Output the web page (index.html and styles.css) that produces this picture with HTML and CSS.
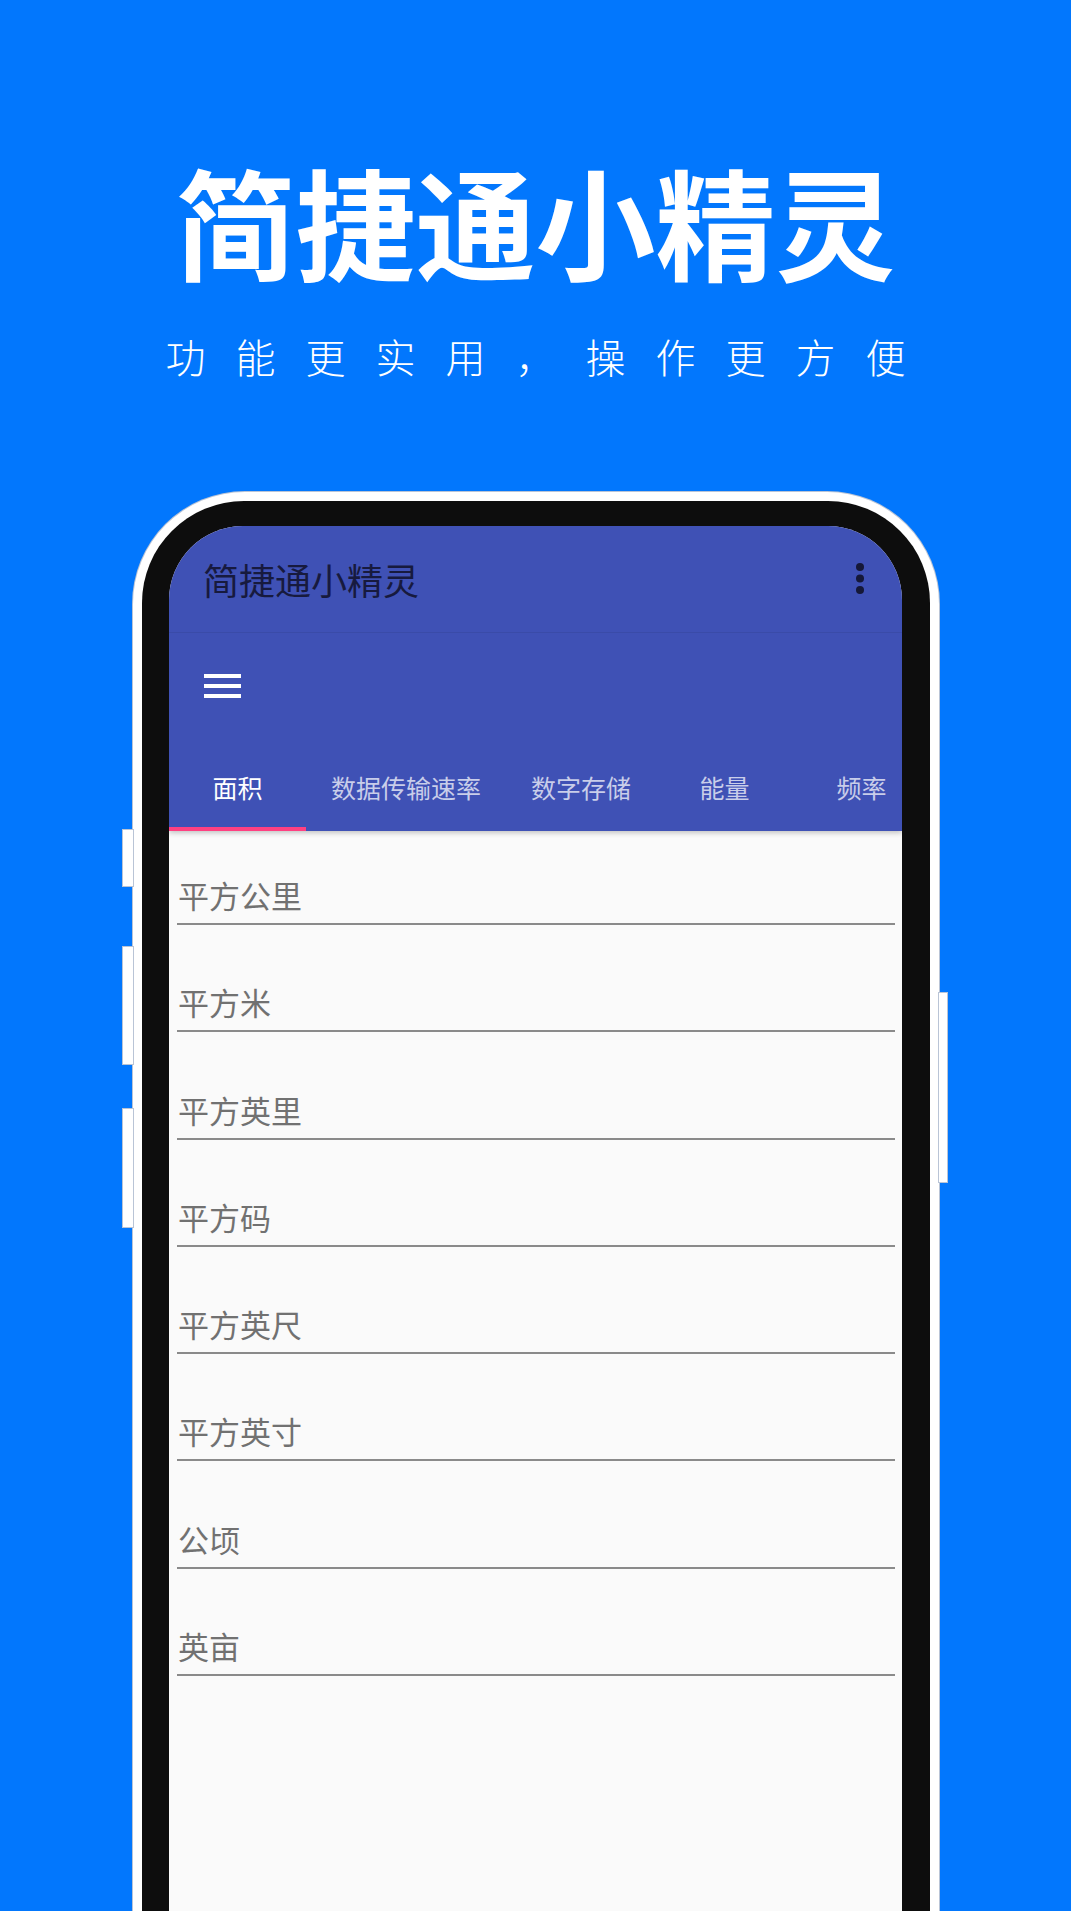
FILE: index.html
```html
<!DOCTYPE html>
<html lang="zh-CN">
<head>
    <meta charset="UTF-8">
    <meta name="viewport" content="width=device-width, initial-scale=1.0">
    <title>简捷通小精灵</title>
    <link rel="stylesheet" href="styles.css">
</head>
<body>
    <div class="hero">
        <h1 class="hero-title">简捷通小精灵</h1>
        <p class="hero-sub">功能更实用，操作更方便</p>
    </div>

    <div class="phone">
        <span class="key key-left key-1"></span>
        <span class="key key-left key-2"></span>
        <span class="key key-left key-3"></span>
        <span class="key key-right"></span>

        <div class="bezel">
            <div class="screen">
                <header class="appbar">
                    <div class="appbar-top">
                        <span class="app-title">简捷通小精灵</span>
                        <svg class="more" width="8" height="32" viewBox="0 0 8 32">
                            <circle cx="4" cy="4" r="4"/>
                            <circle cx="4" cy="15.5" r="4"/>
                            <circle cx="4" cy="27" r="4"/>
                        </svg>
                    </div>
                    <div class="appbar-tool">
                        <svg class="menu" width="37" height="24" viewBox="0 0 37 24">
                            <rect x="0" y="0" width="37" height="4"/>
                            <rect x="0" y="10" width="37" height="4"/>
                            <rect x="0" y="20" width="37" height="4"/>
                        </svg>
                    </div>
                    <nav class="tabs">
                        <div class="tab active">面积</div>
                        <div class="tab">数据传输速率</div>
                        <div class="tab">数字存储</div>
                        <div class="tab">能量</div>
                        <div class="tab">频率</div>
                    </nav>
                </header>

                <main class="fields">
                    <div class="field">平方公里</div>
                    <div class="field">平方米</div>
                    <div class="field">平方英里</div>
                    <div class="field">平方码</div>
                    <div class="field">平方英尺</div>
                    <div class="field">平方英寸</div>
                    <div class="field">公顷</div>
                    <div class="field">英亩</div>
                </main>
            </div>
        </div>
    </div>
</body>
</html>
```

FILE: styles.css
```css
body {
    margin: 0;
    height: 1911px;
    overflow: hidden;
    background-color: #0277fd;
    font-family: "Noto Sans CJK SC", "Noto Sans", sans-serif;
}
.hero {
    text-align: center;
    color: white;
    padding-top: 160px;
}
.hero-title {
    margin: 0;
    font-size: 120px;
    line-height: 120px;
    font-weight: 700;
}
.hero-sub {
    margin: 56px 0 0;
    padding-left: 30px;
    font-size: 40px;
    line-height: 40px;
    font-weight: 300;
    letter-spacing: 30px;
}

/* phone frame */
.phone {
    position: relative;
    width: 788px;
    height: 1500px;
    margin: 116px 0 0 133px;
    padding: 9px 9px 0;
    background: white;
    border-radius: 112px 112px 0 0;
    box-shadow: 0 0 0 1px #b9c4d6;
}
.key {
    position: absolute;
    width: 10px;
    background: white;
    box-shadow: 0 0 0 1px #b9c4d6;
}
.key-left { left: -10px; }
.key-1 { top: 338px; height: 56px; }
.key-2 { top: 455px; height: 117px; }
.key-3 { top: 617px; height: 118px; }
.key-right { right: -8px; width: 8px; top: 501px; height: 189px; }

.bezel {
    height: 100%;
    padding: 25px 28px 0 27px;
    background: #0d0d0d;
    border-radius: 102px 102px 0 0;
    box-sizing: border-box;
}
.screen {
    height: 100%;
    background: #fafafa;
    border-radius: 74px 74px 0 0;
    overflow: hidden;
}

/* app bar */
.appbar {
    background: #3f51b5;
    box-shadow: 0 2px 5px rgba(0, 0, 0, 0.22);
    position: relative;
}
.appbar-top {
    height: 106px;
    display: flex;
    align-items: center;
    justify-content: space-between;
    padding: 0 38px 0 34px;
    border-bottom: 1px solid rgba(0, 0, 0, 0.07);
}
.app-title {
    font-size: 36px;
    color: #171a3e;
}
.more { fill: #151838; }
.appbar-tool {
    height: 106px;
    display: flex;
    align-items: center;
    padding-left: 35px;
}
.menu { fill: white; }

.tabs {
    display: flex;
    height: 92px;
    white-space: nowrap;
}
.tab {
    flex-shrink: 0;
    min-width: 137px;
    padding: 8px 25px 0;
    box-sizing: border-box;
    text-align: center;
    font-size: 25px;
    line-height: 80px;
    color: rgba(255, 255, 255, 0.72);
    border-bottom: 4px solid transparent;
}
.tab.active {
    color: white;
    border-bottom-color: #ff4081;
}

/* input rows */
.fields {
    padding: 44px 7px 0 8px;
}
.field {
    font-size: 31px;
    line-height: 40px;
    color: #717171;
    padding: 0 0 8px 1px;
    border-bottom: 2px solid #8a8a8a;
    margin-bottom: 57.3px;
}
```
